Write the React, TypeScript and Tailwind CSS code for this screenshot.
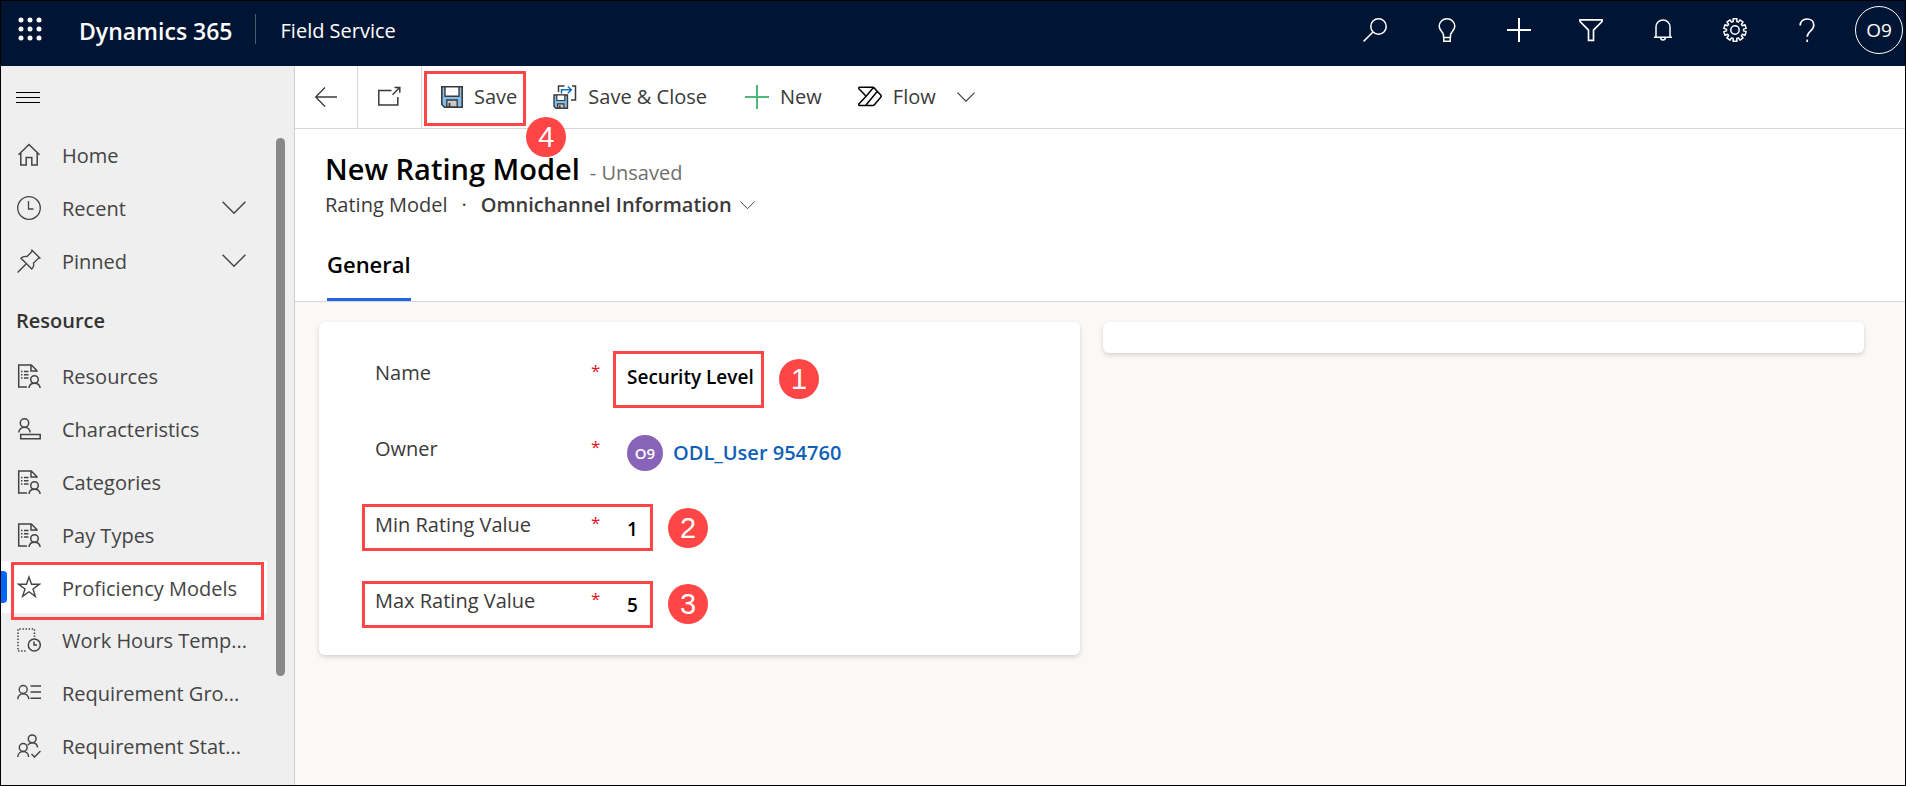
import React, { type ReactNode } from 'react';

type IconProps = { children: ReactNode; className?: string; width?: number };

function Icon({ children, className = '', width = 1.5 }: IconProps) {
  return (
    <svg
      viewBox="0 0 24 24"
      className={`size-6 shrink-0 ${className}`}
      fill="none"
      stroke="currentColor"
      strokeWidth={width}
      aria-hidden="true"
    >
      {children}
    </svg>
  );
}

const SearchIcon = () => (
  <Icon>
    <circle cx="15.5" cy="8.5" r="7.7" />
    <path d="M10 14 0.6 23.4" />
  </Icon>
);

const BulbIcon = () => (
  <Icon>
    <path d="M8.5 19.5v-2.6C8.2 14 4.2 12.5 4.2 8.3a7.8 7.5 0 0 1 15.6 0c0 4.200-4 5.700-4.300 8.600v2.600M8.500 19.500h7M8.800 19.500v3.700h6.400v-3.700" />
  </Icon>
);

const PlusIcon = ({ className = '' }: { className?: string }) => (
  <Icon className={className} width={2}>
    <path d="M12 0v24M0 12h24" />
  </Icon>
);

const FilterIcon = () => (
  <Icon width={1.7}>
    <path d="M1 1.800h22v1.700l-8.500 8.700v10.200h-5V12.200L1 3.500z" />
  </Icon>
);

const BellIcon = () => (
  <Icon>
    <path d="M3 19.200h18M5 19.200V9a7 7 0 0 1 14 0v10.200M9.600 19.500a2.400 2.400 0 0 0 4.800 0" />
  </Icon>
);

const gearPath = (() => {
  const points: string[] = [];
  for (let i = 0; i < 10; i += 1) {
    const base = (i * 36 + 18) * (Math.PI / 180);
    const corners: [number, number][] = [
      [-0.21, 8.6],
      [-0.17, 11.3],
      [0.17, 11.3],
      [0.21, 8.6],
    ];
    corners.forEach(([offset, radius]) => {
      const x = 12 + radius * Math.cos(base + offset);
      const y = 12 + radius * Math.sin(base + offset);
      points.push(`${x.toFixed(2)} ${y.toFixed(2)}`);
    });
  }
  return `M${points.join('L')}Z`;
})();

const GearIcon = () => (
  <Icon>
    <path d={gearPath} strokeLinejoin="round" />
    <circle cx="12" cy="12" r="4.200" />
  </Icon>
);

const HelpIcon = () => (
  <Icon width={1.7}>
    <path d="M5.200 7.500C5.200 3.500 8 1 12 1s6.800 2.500 6.800 6.200c0 5.300-6.600 6.300-6.600 11.600" />
    <path d="M12.200 21.600V24" width={2} />
  </Icon>
);

const WaffleIcon = () => (
  <svg viewBox="0 0 24 24" className="size-6" fill="white" aria-hidden="true">
    {[3, 12, 21].map((y) => [3, 12, 21].map((x) => <circle key={`${x}-${y}`} cx={x} cy={y} r="2.500" />))}
  </svg>
);

const HomeIcon = () => (
  <Icon>
    <path d="M1.500 11.800 12 1.500l10.500 10.300M3.800 10v12h5.400v-7.500h5.600V22h5.400V10" />
  </Icon>
);

const ClockIcon = () => (
  <Icon width={1.3}>
    <circle cx="12" cy="12" r="11.300" />
    <path d="M11.500 5v8h5" />
  </Icon>
);

const PinIcon = () => (
  <Icon width={1.4}>
    <path d="M15 1.200 22.800 9l-1.500.3-4.800 4.800c.5 2.200 0 4.300-1.700 6L4 9.300c1.600-1.600 3.800-2.200 6-1.700l4.700-4.900zM8.800 15.200.6 23.400" />
  </Icon>
);

const PersonListIcon = () => (
  <Icon width={1.5}>
    <path d="M10 23H1.700V1h12.600l5.500 5.500V8M14 1v6h6" />
    <path d="M4 7.500h1.500M7 7.500h4.500M4 10.800h1.500M7 10.800h4.500M4 14h1.500M7 14h4.500" />
    <circle cx="17.500" cy="15.500" r="3.800" />
    <path d="M12 24c.3-3 2.600-4.800 5.500-4.800S22.700 21 23.200 24" />
  </Icon>
);

const PersonBadgeIcon = () => (
  <Icon width={1.5}>
    <circle cx="7.500" cy="6" r="4.200" />
    <path d="M1.800 15.500c0-3 2.500-5.300 5.700-5.300s5.700 2.300 5.700 5.300" />
    <path d="M3.700 17.500h19.500v4.300H3.700z" />
  </Icon>
);

const StarIcon = () => (
  <Icon width={1.4}>
    <path d="m12 2 2.500 7.300h7.800L16 13.900l2.400 7.500L12 16.800l-6.400 4.600L8 13.900 1.700 9.300h7.800z" />
  </Icon>
);

const WorkHoursIcon = () => (
  <Icon width={1.5}>
    <path d="M17.500 9V1H1v22h9" strokeDasharray="1.500 1.600" />
    <circle cx="17.300" cy="17" r="6" />
    <path d="M17 13.500V17h3" />
  </Icon>
);

const GroupListIcon = () => (
  <Icon width={1.4}>
    <circle cx="6.200" cy="8.500" r="4" />
    <path d="M.8 18.200c0-3 2.300-5.500 5.400-5.500s5.600 2.500 5.600 5.500M13.500 5H24M13.500 11H24M13.500 17.200H24" />
  </Icon>
);

const GroupCheckIcon = () => (
  <Icon width={1.5}>
    <circle cx="15.200" cy="4.800" r="3.900" />
    <circle cx="6.200" cy="13.500" r="3.900" />
    <path d="M.8 23c0-3 2.300-5.400 5.400-5.400s5.400 2.300 5.400 5.400M10.800 11.200c1-1.600 2.600-2.500 4.400-2.500 3 0 5 2 5.400 4.800M14.500 20l3 3 6-6" />
  </Icon>
);

const BackIcon = () => (
  <Icon width={1.3}>
    <path d="M23 12H2M11 2.500 1.700 12l9.300 9.500" />
  </Icon>
);

const PopOutIcon = () => (
  <Icon width={1.5}>
    <path d="M14.500 5.500H1.800V20h19v-8" />
    <path d="m15.500 9.700 6.500-6.500M17.500 2.500h5.300v5.300" width={2} />
  </Icon>
);

const SaveIcon = () => (
  <svg viewBox="0 0 24 24" className="size-6 shrink-0" fill="none" aria-hidden="true">
    <path d="M1.800 1.800h20.400v20.400H4.500l-2.700-2.700z" fill="#83beec" stroke="#3a3a3a" strokeWidth="1.600" />
    <path d="M5 1.800h14v9.400H5z" fill="#fff" stroke="#3a3a3a" strokeWidth="1.400" />
    <path d="M6.800 22v-7h10.400v7z" fill="#c8c8c8" stroke="#3a3a3a" strokeWidth="1.400" />
    <path d="M9.500 18v4" stroke="#3a3a3a" strokeWidth="1.800" />
  </svg>
);

const SaveCloseIcon = () => (
  <svg viewBox="0 0 24 24" className="size-6 shrink-0" fill="none" aria-hidden="true">
    <path d="M5.500 7V1h6M19 1h3.500v14h-4.500" stroke="#3a3a3a" strokeWidth="1.500" />
    <path d="M8.500 8.500V4.800h9M14.800 1.500l3.500 3.300-3.500 3.400" stroke="#106ebe" strokeWidth="1.500" />
    <path d="M1 10h13.500v13.300H3L1 21.500z" fill="#83beec" stroke="#3a3a3a" strokeWidth="1.400" />
    <path d="M3.800 10h8v5.500h-8z" fill="#fff" stroke="#3a3a3a" strokeWidth="1.200" />
    <path d="M4.600 23.200v-4.400h6.400v4.400z" fill="#c8c8c8" stroke="#3a3a3a" strokeWidth="1.200" />
    <path d="M6.800 20.500v3" stroke="#3a3a3a" strokeWidth="1.500" />
  </svg>
);

const FlowIcon = () => (
  <Icon className="text-black" width={1.5}>
    <path
      d="M1.800 2.300h13c.6 0 1 .2 1.400.6l6.500 7.200c.6.700.6 1.500 0 2.200l-6.300 7.400c-.4.500-.9.700-1.500.7H1.600c-1 0-1.300-.8-.7-1.500l7.200-7.600L.9 3.700c-.5-.7-.1-1.400.9-1.400zM8.100 11.300l7.400-8.700M7.800 20.200 19.200 6.500"
      strokeLinejoin="round"
    />
  </Icon>
);

function Chevron({ className }: { className: string }) {
  return (
    <svg viewBox="0 0 24 14" className={`shrink-0 ${className}`} fill="none" stroke="currentColor" aria-hidden="true">
      <path d="m.6.8 11.400 11.500L23.400.8" strokeWidth="1.500" />
    </svg>
  );
}

function Badge({ value, className }: { value: number; className: string }) {
  return (
    <span
      className={`absolute z-10 flex size-10 items-center justify-center rounded-full bg-[#ff4646] font-['Liberation_Sans',Arial,sans-serif] text-[29px] leading-none font-normal text-white ${className}`}
    >
      {value}
    </span>
  );
}

function Outline({ className }: { className: string }) {
  return <span className={`pointer-events-none absolute z-10 border-[3px] border-[#ff4646] ${className}`} />;
}

const topActions = [
  { label: 'Search', icon: <SearchIcon /> },
  { label: 'Insights', icon: <BulbIcon /> },
  { label: 'Quick create', icon: <PlusIcon /> },
  { label: 'Advanced find', icon: <FilterIcon /> },
  { label: 'Notifications', icon: <BellIcon /> },
  { label: 'Settings', icon: <GearIcon /> },
  { label: 'Help', icon: <HelpIcon /> },
];

const resourceItems = [
  { label: 'Resources', icon: <PersonListIcon /> },
  { label: 'Characteristics', icon: <PersonBadgeIcon /> },
  { label: 'Categories', icon: <PersonListIcon /> },
  { label: 'Pay Types', icon: <PersonListIcon /> },
  { label: 'Proficiency Models', icon: <StarIcon />, selected: true },
  { label: 'Work Hours Temp...', icon: <WorkHoursIcon /> },
  { label: 'Requirement Gro...', icon: <GroupListIcon /> },
  { label: 'Requirement Stat...', icon: <GroupCheckIcon /> },
];

type NavItemProps = { label: string; icon: ReactNode; selected?: boolean; expandable?: boolean };

function NavItem({ label, icon, selected, expandable }: NavItemProps) {
  return (
    <li className="relative">
      <a
        href="#"
        aria-current={selected ? 'page' : undefined}
        className={`flex items-center gap-[21px] pr-[21px] pl-4 ${selected ? 'h-[52px] bg-white' : 'h-[53px]'}`}
      >
        {icon}
        <span className="flex-1 pt-[3px] whitespace-nowrap">{label}</span>
        {expandable && <Chevron className="w-6" />}
      </a>
      {selected && (
        <>
          <span className="absolute top-[10px] left-0 h-8 w-[6px] rounded-r-sm bg-[#0066ff]" />
          <Outline className="top-px right-[3px] -bottom-[7px] left-[10px]" />
        </>
      )}
    </li>
  );
}

function Field({ id, label, children }: { id: string; label: string; children: ReactNode }) {
  return (
    <div className="relative flex h-[76px] items-center pl-14">
      <label htmlFor={id} className="w-[216px] shrink-0">
        {label}
      </label>
      <span aria-hidden="true" className="w-9 shrink-0 pb-1 text-[17px] text-[#e81123]">
        *
      </span>
      <div className="flex min-w-0 flex-1 items-center pt-[7px]">{children}</div>
    </div>
  );
}

const valueClass = 'w-[128px] bg-transparent text-[19px] font-semibold text-black outline-none';

export default function App() {
  return (
    <div className="flex min-h-screen flex-col border border-black bg-[#faf9f8] font-['Open_Sans','Noto_Sans',sans-serif] text-[20px] leading-7 text-[#3b3a39]">
      <header className="flex h-[65px] shrink-0 items-start bg-[#001433] pr-[2px] text-white">
        <div className="flex h-12 flex-1 items-center pl-[17px]">
          <button type="button" aria-label="App launcher" className="mt-2">
            <WaffleIcon />
          </button>
          <span className="mt-3 ml-[37px] text-[23px] font-semibold">Dynamics 365</span>
          <span className="mt-2 ml-[22px] h-[30px] w-px bg-[#4d5b70]" />
          <span className="mt-3 ml-[25px]">Field Service</span>
        </div>
        <div className="flex items-center pt-[5px]">
          {topActions.map((action) => (
            <button
              key={action.label}
              type="button"
              aria-label={action.label}
              className="flex h-12 w-[72px] items-center justify-center"
            >
              {action.icon}
            </button>
          ))}
          <button
            type="button"
            aria-label="Account"
            className="ml-3 flex size-12 items-center justify-center rounded-full border border-white text-[19px]"
          >
            O9
          </button>
        </div>
      </header>

      <div className="flex flex-1">
        <aside className="relative w-[294px] shrink-0 border-r border-[#d2d0ce] bg-[#efefef]">
          <button type="button" aria-label="Toggle navigation" className="flex h-[62px] items-center pl-[15px] text-black">
            <svg viewBox="0 0 24 12" className="w-6" stroke="currentColor" aria-hidden="true">
              <path d="M0 1.500h24M0 6.500h24M0 11.500h24" />
            </svg>
          </button>
          <nav className="w-[266px] text-[#444]">
            <ul>
              <NavItem label="Home" icon={<HomeIcon />} />
              <NavItem label="Recent" icon={<ClockIcon />} expandable />
              <NavItem label="Pinned" icon={<PinIcon />} expandable />
            </ul>
            <h2 className="flex h-[62px] items-center pt-[5px] pl-[15px] font-semibold text-[#333]">Resource</h2>
            <ul>
              {resourceItems.map((item) => (
                <NavItem key={item.label} {...item} />
              ))}
            </ul>
          </nav>
          <span className="absolute top-[72px] right-[9px] h-[538px] w-[9px] rounded-full bg-[#888]" />
        </aside>

        <main className="flex min-w-0 flex-1 flex-col">
          <div className="flex h-[63px] shrink-0 items-stretch border-b border-[#d6d6d6] bg-white">
            <button
              type="button"
              aria-label="Back"
              className="flex w-[63px] items-center justify-center border-r border-[#d6d6d6]"
            >
              <BackIcon />
            </button>
            <button
              type="button"
              aria-label="Open in new window"
              className="flex w-16 items-center justify-center border-r border-[#d6d6d6] pr-[2px]"
            >
              <PopOutIcon />
            </button>
            <div className="relative flex">
              <button type="button" className="flex items-center gap-[10px] px-[18px]">
                <SaveIcon />
                Save
              </button>
              <Outline className="top-[5px] right-[9px] bottom-[2px] left-[2px]" />
              <Badge value={4} className="top-[51px] -right-[31px]" />
            </div>
            <button type="button" className="flex items-center gap-[11px] pr-5 pl-[18px]">
              <SaveCloseIcon />
              Save &amp; Close
            </button>
            <button type="button" className="flex items-center gap-[11px] px-[18px]">
              <PlusIcon className="text-[#4db879]" />
              New
            </button>
            <button type="button" className="flex items-center gap-[11px] px-[18px]">
              <FlowIcon />
              Flow
              <Chevron className="ml-[10px] w-[18px]" />
            </button>
          </div>

          <div className="border-b border-[#d6d6d6] bg-white pt-[22px] pl-[30px]">
            <div className="flex items-baseline gap-[10px]">
              <h1 className="text-[29px] leading-9 font-semibold text-black">New Rating Model</h1>
              <span className="text-[#706e6b]">- Unsaved</span>
            </div>
            <div className="mt-1 flex items-center">
              <span className="font-medium">Rating Model</span>
              <span className="mx-[14px]">·</span>
              <button type="button" className="flex items-center gap-[8px] font-semibold">
                Omnichannel Information
                <Chevron className="w-[15px]" />
              </button>
            </div>
            <div role="tablist" className="mt-[26px] flex pl-[2px]">
              <button
                type="button"
                role="tab"
                aria-selected="true"
                className="h-14 border-b-[3px] border-[#2266e3] pb-4 text-[22px] font-semibold text-black"
              >
                General
              </button>
            </div>
          </div>

          <div className="grid grid-cols-2 items-start gap-[23px] pt-5 pr-[41px] pl-6">
            <section className="rounded-md bg-white pt-[13px] pb-4 shadow-[0_2px_5px_rgba(0,0,0,0.16)]">
              <Field id="name" label="Name">
                <input id="name" className={valueClass} defaultValue="Security Level" />
                <Outline className="top-4 left-[294px] h-[57px] w-[151px]" />
                <Badge value={1} className="top-6 left-[460px]" />
              </Field>
              <Field id="owner" label="Owner">
                <span className="flex size-9 items-center justify-center rounded-full bg-[#8764b8] text-[15px] font-semibold text-white">
                  O9
                </span>
                <a id="owner" href="#" className="ml-[10px] font-semibold text-[#1160b7]">
                  ODL_User 954760
                </a>
              </Field>
              <Field id="min-rating" label="Min Rating Value">
                <input id="min-rating" className={valueClass} defaultValue="1" />
                <Outline className="top-[17px] left-[43px] h-[47px] w-[291px]" />
                <Badge value={2} className="top-[21px] left-[349px]" />
              </Field>
              <Field id="max-rating" label="Max Rating Value">
                <input id="max-rating" className={valueClass} defaultValue="5" />
                <Outline className="top-[18px] left-[43px] h-[47px] w-[291px]" />
                <Badge value={3} className="top-[21px] left-[349px]" />
              </Field>
            </section>
            <section className="h-[31px] rounded-md bg-white shadow-[0_2px_5px_rgba(0,0,0,0.16)]" />
          </div>
        </main>
      </div>
    </div>
  );
}
